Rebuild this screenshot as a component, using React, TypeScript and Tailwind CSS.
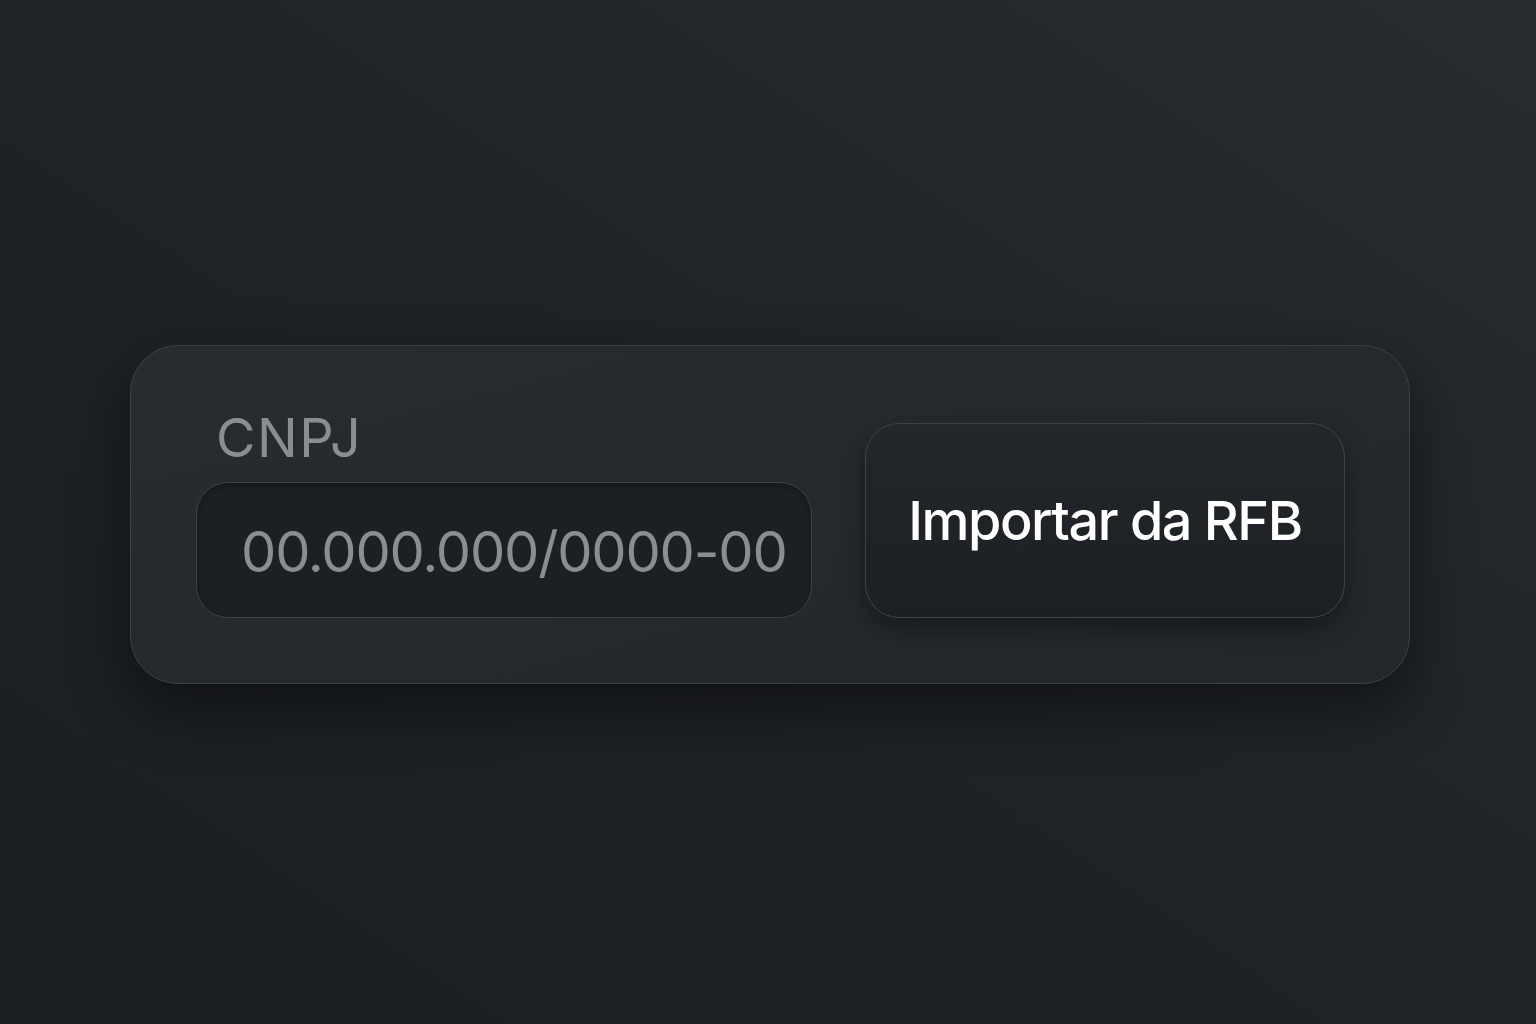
import { useState } from 'react';

export default function App() {
  const [cnpj, setCnpj] = useState('');

  return (
    <div
      className="w-[1536px] h-[1024px] bg-linear-to-bl from-[#282b30] via-[#1f2226] to-[#1b1e22] pt-[345px] pl-[130px]"
      style={{ fontFamily: 'Inter, "Noto Sans", sans-serif' }}
    >
      <div className="w-[1280px] h-[339px] flex items-end gap-[53px] pl-[65px] pr-[63px] pb-[65px] rounded-[48px] border border-[#3c3f44] bg-linear-to-br from-[#282b30] to-[#23262a] shadow-[0_24px_60px_rgba(0,0,0,0.45)]">
        <div className="flex flex-col">
          <label className="ml-[20px] mb-[17px] text-[54px] leading-none font-normal text-[#8a8e93] tracking-[1.5px]">
            CNPJ
          </label>
          <div className="w-[616px] h-[136px] flex items-center pl-[44px] pt-[4px] rounded-[32px] border border-[#3f4247] bg-[#1c1f23] shadow-[inset_0_2px_6px_rgba(0,0,0,0.25)]">
            <input
              value={cnpj}
              onChange={(e) => setCnpj(e.target.value)}
              placeholder="00.000.000/0000-00"
              className="w-full bg-transparent outline-none text-[56px] leading-none text-[#8a8e93] placeholder:text-[#8a8e93] tracking-[-1.2px]"
            />
          </div>
        </div>
        <button className="w-[480px] h-[195px] flex items-center justify-center rounded-[34px] border border-[#3f4247] bg-linear-to-b from-[#23262a] to-[#1c1f23] shadow-[0_10px_24px_rgba(0,0,0,0.35)] text-[54px] font-medium text-white tracking-[-1.5px]">
          Importar da RFB
        </button>
      </div>
    </div>
  );
}
